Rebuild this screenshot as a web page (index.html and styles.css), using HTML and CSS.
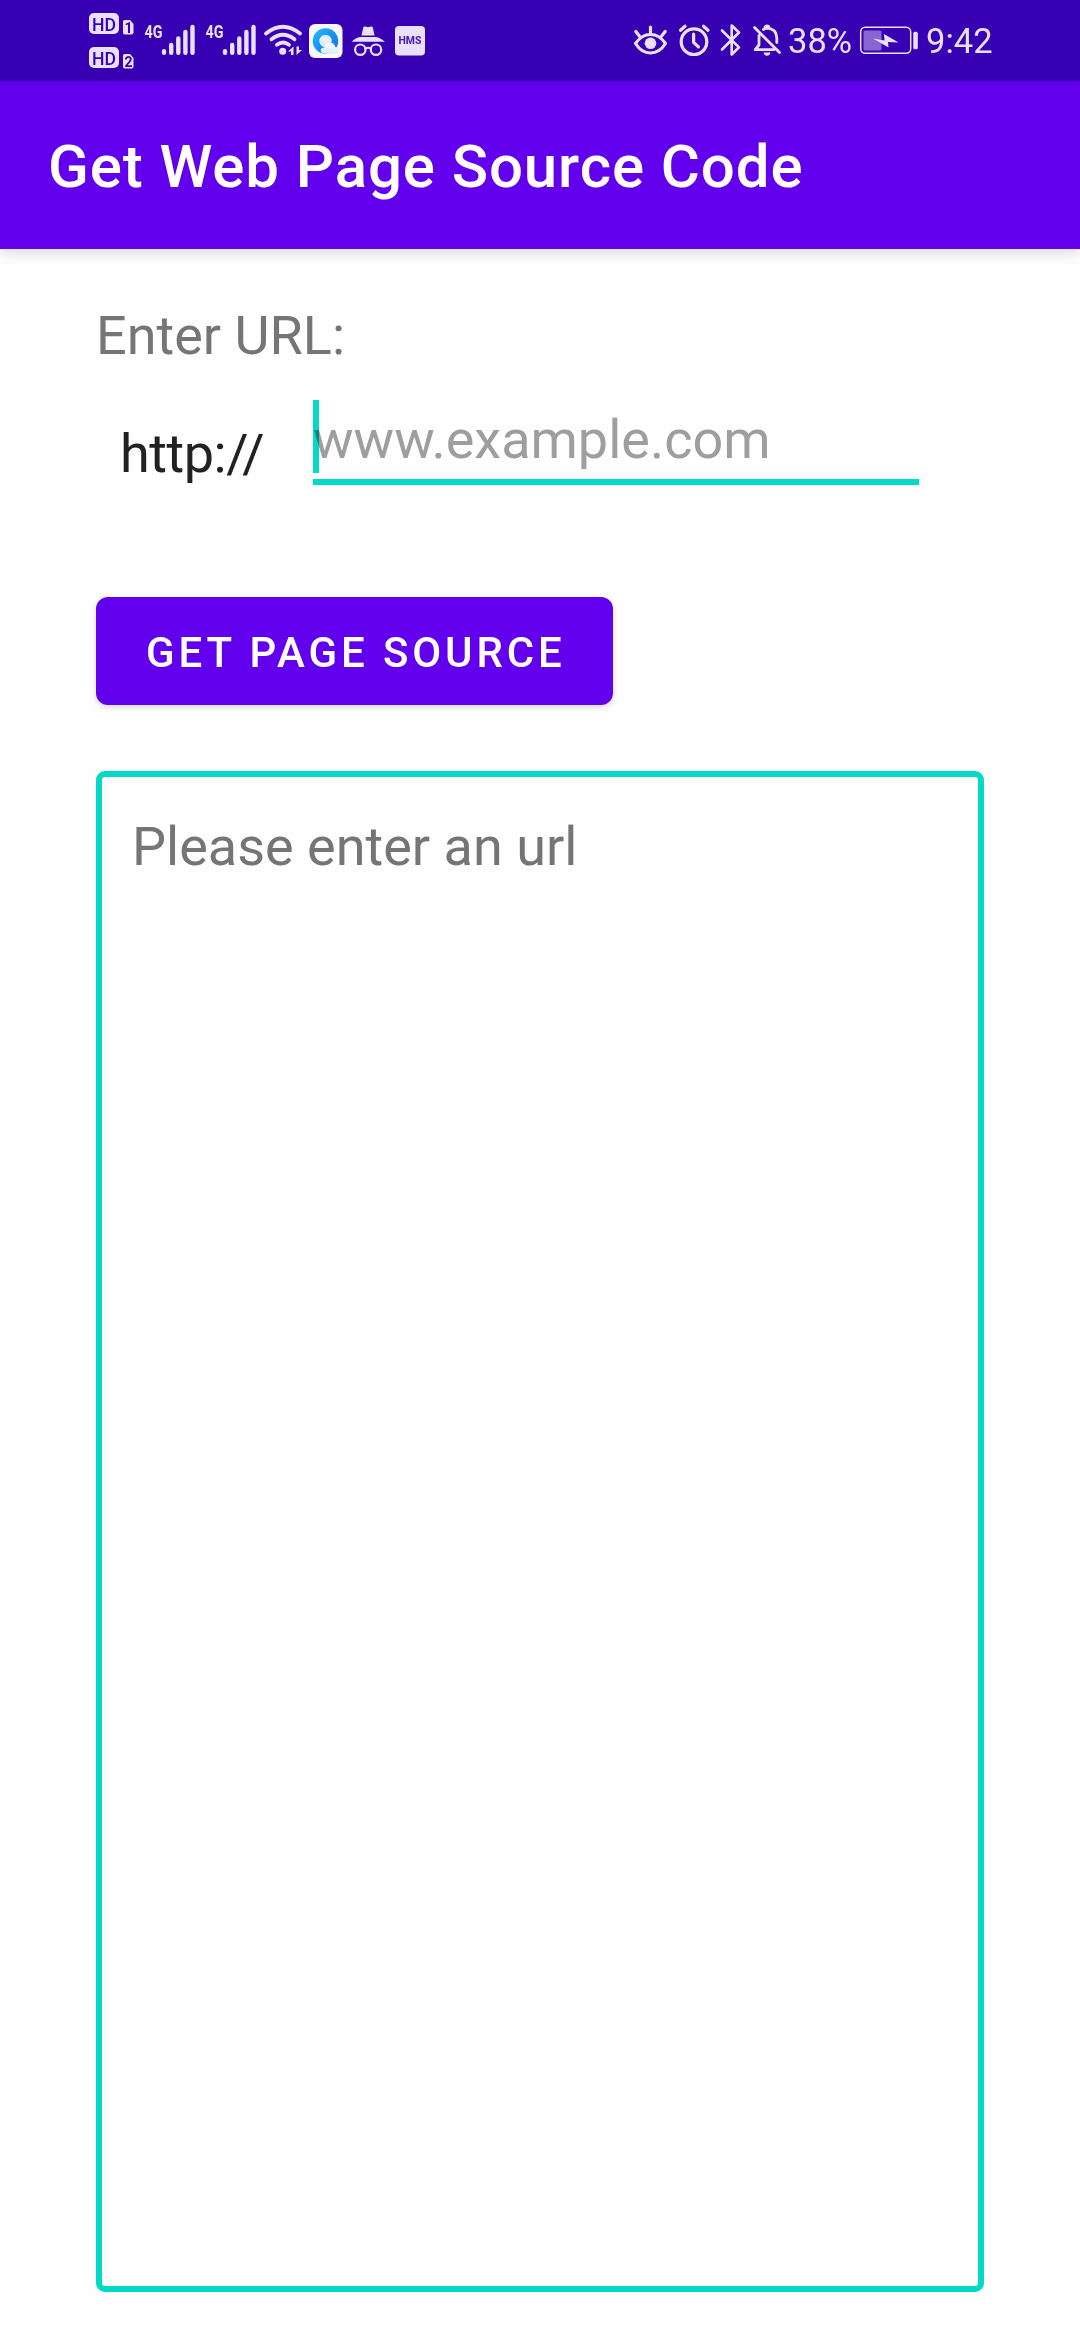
FILE: index.html
```html
<!DOCTYPE html>
<html lang="en">
<head>
<meta charset="utf-8">
<title>Get Web Page Source Code</title>
<link rel="stylesheet" href="styles.css">
</head>
<body>
<div class="status-bar">
  <div class="status-group">
    <svg class="icon" width="56" height="81" viewBox="84 0 56 81">
      <rect class="solid" x="89" y="13" width="30" height="21" rx="5"/>
      <text class="badge-hd" x="92" y="30.5" textLength="24" lengthAdjust="spacingAndGlyphs">HD</text>
      <path class="solid" d="M124.500 20H130l3.500 4v8.500q0 2-2 2h-7q-1.500 0-1.500-2v-11q0-1.500 1.500-1.500z"/>
      <text class="badge-num" x="124.500" y="32.500">1</text>
      <rect class="solid" x="89" y="47" width="30" height="21" rx="5"/>
      <text class="badge-hd" x="92" y="64.500" textLength="24" lengthAdjust="spacingAndGlyphs">HD</text>
      <path class="solid" d="M124.500 54H130l3.500 4v8.500q0 2-2 2h-7q-1.500 0-1.500-2v-11q0-1.500 1.500-1.500z"/>
      <text class="badge-num" x="124.500" y="66.500">2</text>
    </svg>
    <svg class="icon" width="61" height="81" viewBox="140 0 61 81">
      <text class="network" x="144.500" y="38" textLength="18" lengthAdjust="spacingAndGlyphs">4G</text>
      <path class="bars" d="M164 51.300v1.500M171.200 45v7.800M178.300 38.500v14.300M185.400 32v20.800M192.500 27v25.800"/>
    </svg>
    <svg class="icon" width="61" height="81" viewBox="140 0 61 81">
      <text class="network" x="144.500" y="38" textLength="18" lengthAdjust="spacingAndGlyphs">4G</text>
      <path class="bars" d="M164 51.300v1.500M171.200 45v7.800M178.300 38.500v14.300M185.400 32v20.800M192.500 27v25.800"/>
    </svg>
    <svg class="icon" width="43" height="81" viewBox="262 0 43 81">
      <path class="line wifi" d="M266 33.500q17-13.500 34 0M271.500 39.300q11.500-9 23 0M277 44.800q6-4.500 12 0"/>
      <circle class="solid" cx="282.700" cy="51.300" r="3.500"/>
      <path class="solid" d="M293.500 46.500v8.500h-2.500v-3.500h-3zM296.500 55v-8.500h2.500v3.500h3z"/>
    </svg>
    <svg class="icon" width="42" height="81" viewBox="305 0 42 81">
      <defs>
        <linearGradient id="ring" x1="0" y1="0" x2="1" y2="1">
          <stop offset="0" stop-color="#20b4fb"/>
          <stop offset="0.500" stop-color="#1495f2"/>
          <stop offset="1" stop-color="#1b76e0"/>
        </linearGradient>
        <linearGradient id="cloud" x1="0" y1="0" x2="0" y2="1">
          <stop offset="0" stop-color="#ffffff"/>
          <stop offset="1" stop-color="#d9eafc"/>
        </linearGradient>
      </defs>
      <rect x="309" y="24" width="33.500" height="34" rx="6" fill="#f8f8fd"/>
      <circle cx="325.500" cy="41" r="9.500" fill="#e6ecf6" stroke="url(#ring)" stroke-width="6.500"/>
      <path fill="url(#cloud)" d="M325 53.700q-4.500-.4-4.300-3.600.6-2.800 3.800-2.600 1-4.700 5.800-4.700 4.300.2 5 4.200 3.800.3 3.700 3.500-.4 3.200-4 3.200z"/>
    </svg>
    <svg class="icon" width="42" height="81" viewBox="347 0 42 81">
      <path class="solid" d="M361.500 35.500l1.800-8q.5-1.500 2-1l2.700.8 2.700-.8q1.700-.5 2.100 1l1.800 8zM351.500 41.700q5-4.500 9.500-4.700h14q4.500.2 10 4.700z"/>
      <g class="line thin"><circle cx="360.300" cy="49.700" r="5.200"/><circle cx="376" cy="49.700" r="5.200"/><path d="M365.500 48.500q2.500-1.500 5.300 0"/></g>
    </svg>
    <svg class="icon" width="41" height="81" viewBox="389 0 41 81">
      <rect class="solid" x="395" y="26" width="30" height="29.500" rx="4"/>
      <text class="hms" x="398.500" y="44" textLength="23" lengthAdjust="spacingAndGlyphs">HMS</text>
    </svg>
  </div>
  <div class="status-group">
    <svg class="icon" width="42" height="81" viewBox="629 0 42 81">
      <path class="line" d="M634.500 43.500q6-9 15-9t15 9q-6 9.500-15 9.500t-15-9.500zM649.500 27v6M634.800 31.500l3.400 4.300M664.200 31.500l-3.400 4.300"/>
      <circle class="solid" cx="649.500" cy="43.300" r="5.800"/>
    </svg>
    <svg class="icon" width="43" height="81" viewBox="671 0 43 81">
      <circle class="line" cx="693" cy="41.700" r="12.800"/>
      <path class="line" d="M692.600 34v8.300l4.800 4.500M679.500 30.300l4.500-4M702.500 26.300l4.500 4"/>
    </svg>
    <svg class="icon" width="34" height="81" viewBox="714 0 34 81">
      <path class="line bluetooth" d="M721 30.500l17 16.800-7.300 7.200v-29l7.300 7L721 49.500"/>
    </svg>
    <svg class="icon" width="39" height="81" viewBox="748 0 39 81">
      <path class="line bell" d="M753.500 27.500L778.500 52.500M758 35.500v9.500l-3.800 4.700h18.500M762.500 29.500q2-1.300 3.500-1.300 9.500.5 9.800 9.800v4.500M764 27.500q.3-1.500 2-1.500t2 1.500"/>
      <path class="solid" d="M762.500 52.500h7q-1 3.200-3.500 3.200t-3.500-3.200z"/>
    </svg>
    <span class="status-text battery-level">38%</span>
    <svg class="icon" width="63" height="81" viewBox="855 0 63 81">
      <rect class="line battery" x="859.700" y="27.200" width="50" height="26" rx="4.500"/>
      <rect class="solid charge" x="862.500" y="30.500" width="18" height="20" rx="1.500"/>
      <path class="solid" d="M872 38.500l11.500 2-.5-6.500 14.500 8.500-10.500-.5.500 5.500z"/>
      <rect class="solid" x="912.300" y="31.800" width="4.500" height="17.500" rx="1.500"/>
    </svg>
    <span class="status-text clock">9:42</span>
  </div>
</div>
<header class="app-bar"><h1 class="title">Get Web Page Source Code</h1></header>
<main class="content">
  <label class="label" for="url">Enter URL:</label>
  <div class="url-row">
    <span class="scheme">http:<span class="slash">/</span>/</span>
    <div class="field" id="url"><span class="hint">www.example.com</span><span class="cursor"></span></div>
  </div>
  <button class="button">GET PAGE SOURCE</button>
  <div class="output">Please enter an url</div>
</main>
</body>
</html>
```
FILE: styles.css
```css
* { box-sizing: border-box; }

body {
  margin: 0;
  width: 1080px;
  height: 2340px;
  display: flex;
  flex-direction: column;
  background: #fefefe;
  font-family: Roboto, "Noto Sans", sans-serif;
  overflow: hidden;
}

.status-bar {
  flex: none;
  display: flex;
  justify-content: space-between;
  height: 81px;
  padding: 0 88px 0 84px;
  background: #3700b3;
  color: #ebe0fb;
}

.status-group { display: flex; }

.icon { display: block; flex: none; }
.solid { fill: #ebe0fb; }
.line {
  fill: none;
  stroke: #ebe0fb;
  stroke-width: 3.2;
  stroke-linecap: round;
  stroke-linejoin: round;
}
.wifi { stroke-width: 3.8; }
.thin { stroke-width: 2.2; }
.bluetooth { stroke-width: 2.6; }
.bell { stroke-width: 2.8; }
.battery { stroke-width: 1.5; }
.charge { opacity: 0.45; }
.bars {
  stroke: #ebe0fb;
  stroke-width: 4.4;
  stroke-linecap: round;
}
.badge-hd { font-size: 19px; font-weight: 500; fill: #3700b3; }
.badge-num { font-size: 14px; font-weight: 700; fill: #3700b3; }
.network { font-size: 18.5px; font-weight: 700; fill: #ebe0fb; }
.hms { font-size: 10px; font-weight: 800; fill: #4b1fba; }

.status-text {
  font-size: 34.5px;
  line-height: 82px;
  white-space: nowrap;
}
.battery-level { width: 68px; }
.clock { width: 66px; margin-left: 7px; }

.app-bar {
  flex: none;
  display: flex;
  align-items: center;
  height: 168px;
  padding: 4px 48px 0;
  background: #6200ee;
  box-shadow: 0 4px 12px rgba(0, 0, 0, 0.14);
}
.title {
  margin: 0;
  color: #fff;
  font-size: 60px;
  line-height: 70px;
  font-weight: 500;
  letter-spacing: 0.9px;
}

.content {
  flex: 1;
  display: flex;
  flex-direction: column;
  align-items: flex-start;
  padding: 55px 96px 48px;
}
.label {
  color: #757575;
  font-size: 54px;
  line-height: 64px;
}
.url-row {
  display: flex;
  width: 823px;
  height: 117px;
  padding-left: 24px;
}
.scheme {
  width: 193px;
  padding-top: 54px;
  color: #212121;
  font-size: 54px;
  line-height: 64px;
  letter-spacing: -0.45px;
}
.slash { letter-spacing: -6.2px; }
.field {
  position: relative;
  flex: 1;
  padding-top: 40px;
  border-bottom: 6px solid #03dac5;
}
.hint {
  display: block;
  color: #9e9e9e;
  font-size: 54px;
  line-height: 64px;
}
.cursor {
  position: absolute;
  left: 0;
  top: 32px;
  width: 6px;
  height: 73px;
  background: #03dac5;
  mix-blend-mode: multiply;
}
.button {
  flex: none;
  width: 517px;
  height: 108px;
  margin: 112px 0 66px;
  padding: 3px 0 0 50px;
  border: 0;
  border-radius: 12px;
  background: #6200ee;
  box-shadow: 0 2px 6px rgba(0, 0, 0, 0.16);
  color: #fff;
  font: 500 42px/50px Roboto, sans-serif;
  letter-spacing: 3.9px;
  text-align: left;
  white-space: nowrap;
}
.output {
  flex: 1;
  align-self: stretch;
  padding: 38px 30px;
  border: 6px solid #03dac5;
  border-radius: 9px;
  color: #757575;
  font-size: 54px;
  line-height: 64px;
}
```
